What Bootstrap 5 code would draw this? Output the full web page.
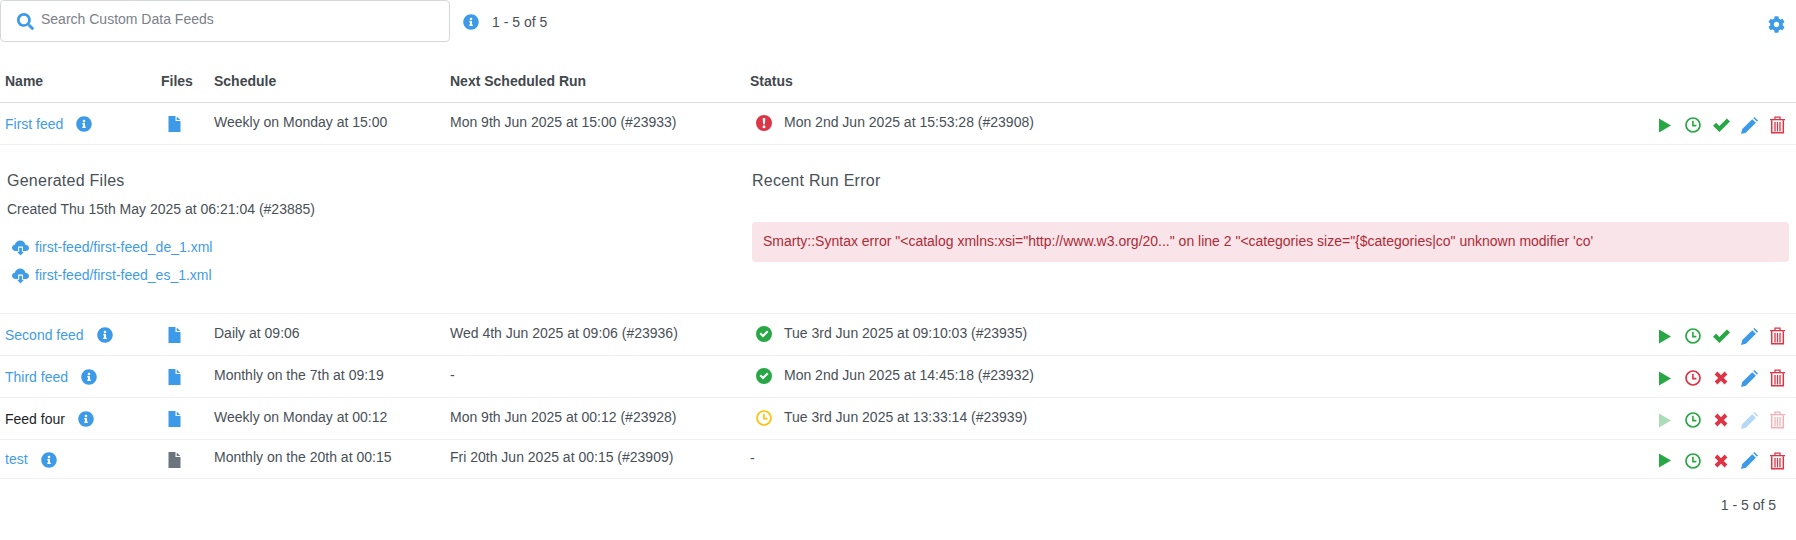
<!DOCTYPE html>
<html lang="en">
<head>
<meta charset="utf-8">
<title>Custom Data Feeds</title>
<link href="https://cdn.jsdelivr.net/npm/bootstrap@5.3.0/dist/css/bootstrap.min.css" rel="stylesheet">
<style>
body{font-family:"Liberation Sans",Arial,sans-serif;font-size:14px;color:#495057;background:#fff;margin:0}
a{color:#3f9ce8;text-decoration:none}
.ic{fill:currentColor;display:block;flex:none}
.c-blue{color:#3c9ae8}.c-green{color:#28a745}.c-red{color:#dc3545}.c-amber{color:#ffc107}.c-grey{color:#6c757d}
.dim{opacity:.38}
.topbar{height:60px}
.searchbox{width:450px;height:42px;border:1px solid #d5d8da;border-radius:4px;padding:0 0 0 16px;gap:7px}
.searchbox input{border:0;outline:0;flex:1;font:14px "Liberation Sans",Arial,sans-serif;color:#495057;padding:0;margin-top:-4px}
.searchbox input::placeholder{color:#7b8187}
.pageinfo{margin-left:13px;gap:13px}
.pageinfo svg{margin-top:6px}
.pageinfo span{margin-top:4px}
.cogwrap{padding:16px 11px 0 0}
.feeds{table-layout:fixed;width:100%;margin:0;border-collapse:collapse}
.feeds th,.feeds td{padding:0 5px;vertical-align:middle;color:#495057;background:transparent;box-shadow:none}
.feeds thead th{height:42px;padding-top:1px;border-bottom:1px solid #dcdcdc;font-weight:700;color:#43484d}
.feeds tbody td{border-bottom:1px solid #eff0f1;height:42px}
.feeds tbody tr.short td{height:39px}
.w-name{width:156px}.w-files{width:53px}.w-sched{width:236px}.w-next{width:300px}.w-status{width:auto}.w-act{width:180px}
.namecell{gap:13px;padding-top:2px}
.plain{color:#212529}
.up{position:relative;top:-1px}
.fileicon{margin:2px 0 0 7px}
.statuscell{gap:12px;padding-left:6px}
.actions{gap:8px;padding-right:4px;padding-top:4px}
.actions>span{width:20px;display:flex;justify-content:center}
.detail{height:168px;padding:0 7px}
.detail .side-l{width:745px}
.detail .side-r{flex:1;padding-right:0}
.dh{font-size:16px;font-weight:400;margin:26px 0 0;line-height:20px;color:#495057;letter-spacing:.25px}
.filelist{margin-top:14px;padding-left:5px}
.filelist a{gap:6px;height:28px}
.errbox{margin:31px 0 0;padding:10px 11px;background:#f9e5e9;color:#b02a37;border:0;border-radius:4px;height:40px;line-height:19px}
.foot{padding:16px 20px 0 0}
</style>
</head>
<body>
<svg width="0" height="0" class="position-absolute">
<symbol id="i-info" viewBox="0 0 512 512"><path d="M256 8C119 8 8 119.1 8 256c0 137 111 248 248 248s248-111 248-248C504 119.1 393 8 256 8zm0 110c23.2 0 42 18.8 42 42s-18.8 42-42 42-42-18.8-42-42 18.8-42 42-42zm56 254c0 6.6-5.4 12-12 12h-88c-6.6 0-12-5.4-12-12v-24c0-6.6 5.4-12 12-12h12v-64h-12c-6.6 0-12-5.4-12-12v-24c0-6.6 5.4-12 12-12h64c6.6 0 12 5.4 12 12v100h12c6.6 0 12 5.4 12 12v24z"/></symbol>
<symbol id="i-search" viewBox="0 0 512 512"><path d="M505 442.7L405.3 343c-4.5-4.5-10.6-7-17-7H372c27.6-35.3 44-79.7 44-128C416 93.1 322.9 0 208 0S0 93.1 0 208s93.1 208 208 208c48.3 0 92.7-16.4 128-44v16.3c0 6.4 2.5 12.5 7 17l99.7 99.7c9.4 9.4 24.6 9.4 33.9 0l28.3-28.3c9.4-9.4 9.4-24.6.1-34zM208 336c-70.7 0-128-57.2-128-128 0-70.7 57.2-128 128-128 70.7 0 128 57.2 128 128 0 70.7-57.2 128-128 128z"/></symbol>
<symbol id="i-cog" viewBox="0 0 512 512"><path d="M487.4 315.7l-42.6-24.6c4.3-23.2 4.3-47 0-70.2l42.6-24.6c4.9-2.8 7.1-8.6 5.5-14-11.1-35.6-30-67.8-54.7-94.6-3.8-4.1-10-5.1-14.8-2.3L380.8 110c-17.9-15.4-38.5-27.3-60.8-35.1V25.8c0-5.6-3.9-10.5-9.4-11.7-36.7-8.2-74.3-7.8-109.2 0-5.5 1.2-9.4 6.1-9.4 11.7V75c-22.2 7.9-42.8 19.8-60.8 35.1L88.7 85.5c-4.9-2.8-11-1.9-14.8 2.3-24.7 26.7-43.6 58.9-54.7 94.6-1.7 5.4.6 11.2 5.5 14L67.3 221c-4.3 23.2-4.3 47 0 70.2l-42.6 24.6c-4.9 2.8-7.1 8.6-5.5 14 11.1 35.6 30 67.8 54.7 94.6 3.8 4.1 10 5.1 14.8 2.3l42.6-24.6c17.9 15.4 38.5 27.3 60.8 35.1v49.2c0 5.6 3.9 10.5 9.4 11.7 36.7 8.2 74.3 7.8 109.2 0 5.5-1.2 9.4-6.1 9.4-11.7v-49.2c22.2-7.9 42.8-19.8 60.8-35.1l42.6 24.6c4.9 2.8 11 1.9 14.8-2.3 24.7-26.7 43.6-58.9 54.7-94.6 1.5-5.5-.7-11.3-5.6-14.1zM256 336c-44.1 0-80-35.9-80-80s35.9-80 80-80 80 35.9 80 80-35.9 80-80 80z"/></symbol>
<symbol id="i-file" viewBox="0 0 12 16"><path d="M0 0h7v5h5v11H0z"/><path d="M8.200 0.400 11.800 3.900H8.200z"/></symbol>
<symbol id="i-play" viewBox="0 0 12 14"><path d="M0 0 12 7 0 14z"/></symbol>
<symbol id="i-clock" viewBox="0 0 16 16"><circle cx="8" cy="8" r="7" fill="none" stroke="currentColor" stroke-width="1.7"/><path d="M7.900 3.800V8.600H11.400" fill="none" stroke="currentColor" stroke-width="1.6"/></symbol>
<symbol id="i-check" viewBox="0 0 16 13"><path d="M0 7.200 2.900 4.300 6 7.400 13.100.3 16 3.200 6 13z"/></symbol>
<symbol id="i-times" viewBox="0 0 14 14"><path d="M0.600 3.400 3.400.6 7 4.200 10.600.6 13.400 3.400 9.800 7 13.400 10.600 10.600 13.400 7 9.800 3.400 13.400.6 10.600 4.200 7z"/></symbol>
<symbol id="i-pencil" viewBox="0 0 16 16"><path d="M0 16 1.200 11.400 10.600 2 14 5.400 4.600 14.800z"/><path d="M11.600 1 12.600 0 16 3.400 15 4.400z"/></symbol>
<symbol id="i-trash" viewBox="0 0 15 17"><path d="M0 2.500h15v1.300H0z"/><path d="M5 2.600V.6h5v2" fill="none" stroke="currentColor" stroke-width="1.300"/><path d="M1.700 3.800V16.300H13.300V3.800" fill="none" stroke="currentColor" stroke-width="1.500"/><path d="M5 5.500V15M7.500 5.500V15M10 5.500V15" fill="none" stroke="currentColor" stroke-width="1.300"/></symbol>
<symbol id="i-cloud" viewBox="0 0 18 16"><path d="M4 11.200C1.800 11.200 0 9.900 0 7.800 0 6 1.300 4.700 3 4.500 3.700 1.900 5.800 0 8.700 0c3 0 5 2 5.500 4.500C16.300 4.500 18 6 18 8c0 1.900-1.500 3.200-3.400 3.200H11.600V6.500H6.500v4.700z"/><path d="M7.600 7.700h2.900v4.200h2.200L9 15.900 5.300 11.900h2.300z"/></symbol>
<symbol id="i-excl" viewBox="0 0 16 16"><path fill-rule="evenodd" d="M8 0a8 8 0 1 0 0 16A8 8 0 0 0 8 0zM6.700 3h2.600l-.4 6.300H7.100zM8 10.200a1.500 1.500 0 1 1 0 3 1.500 1.500 0 0 1 0-3z"/></symbol>
<symbol id="i-okc" viewBox="0 0 16 16"><path fill-rule="evenodd" d="M8 0a8 8 0 1 0 0 16A8 8 0 0 0 8 0zM3.500 8.100 5 6.600 7 8.600 11 4.600 12.500 6.100 7 11.600z"/></symbol>
</svg>

<div class="topbar d-flex">
  <div class="searchbox d-flex align-items-center">
    <svg class="ic c-blue" width="17" height="17"><use href="#i-search"/></svg>
    <input type="text" placeholder="Search Custom Data Feeds" aria-label="Search">
  </div>
  <div class="pageinfo d-flex align-items-start pt-2">
    <svg class="ic c-blue" width="16" height="16"><use href="#i-info"/></svg>
    <span>1 - 5 of 5</span>
  </div>
  <div class="cogwrap ms-auto"><svg class="ic c-blue" width="17" height="17"><use href="#i-cog"/></svg></div>
</div>

<table class="table feeds">
  <thead>
    <tr><th class="w-name">Name</th><th class="w-files">Files</th><th class="w-sched">Schedule</th><th class="w-next">Next Scheduled Run</th><th class="w-status">Status</th><th class="w-act"></th></tr>
  </thead>
  <tbody>
    <tr>
      <td><div class="d-flex align-items-center namecell"><a href="#">First feed</a><svg class="ic c-blue" width="16" height="16"><use href="#i-info"/></svg></div></td>
      <td><svg class="ic c-blue fileicon" width="13" height="16"><use href="#i-file"/></svg></td>
      <td><span class="up">Weekly on Monday at 15:00</span></td>
      <td><span class="up">Mon 9th Jun 2025 at 15:00 (#23933)</span></td>
      <td><div class="d-flex align-items-center statuscell"><svg class="ic c-red" width="16" height="16"><use href="#i-excl"/></svg><span class="up">Mon 2nd Jun 2025 at 15:53:28 (#23908)</span></div></td>
      <td><div class="d-flex justify-content-end align-items-center actions">
        <span><svg class="ic c-green" width="12" height="15"><use href="#i-play"/></svg></span>
        <span><svg class="ic c-green" width="16" height="16"><use href="#i-clock"/></svg></span>
        <span><svg class="ic c-green" width="17" height="14"><use href="#i-check"/></svg></span>
        <span><svg class="ic c-blue" width="17" height="17"><use href="#i-pencil"/></svg></span>
        <span><svg class="ic c-red" width="15" height="18"><use href="#i-trash"/></svg></span>
      </div></td>
    </tr>
    <tr>
      <td colspan="6" class="p-0">
        <div class="detail d-flex">
          <div class="side-l">
            <h5 class="dh">Generated Files</h5>
            <p class="mb-0 mt-2">Created Thu 15th May 2025 at 06:21:04 (#23885)</p>
            <div class="filelist d-flex flex-column">
              <a href="#" class="d-flex align-items-center"><svg class="ic" width="17" height="16"><use href="#i-cloud"/></svg>first-feed/first-feed_de_1.xml</a>
              <a href="#" class="d-flex align-items-center"><svg class="ic" width="17" height="16"><use href="#i-cloud"/></svg>first-feed/first-feed_es_1.xml</a>
            </div>
          </div>
          <div class="side-r">
            <h5 class="dh">Recent Run Error</h5>
            <div class="errbox">Smarty::Syntax error "&lt;catalog xmlns:xsi="http://www.w3.org/20..." on line 2 "&lt;categories size="{$categories|co" unknown modifier 'co'</div>
          </div>
        </div>
      </td>
    </tr>
    <tr>
      <td><div class="d-flex align-items-center namecell"><a href="#">Second feed</a><svg class="ic c-blue" width="16" height="16"><use href="#i-info"/></svg></div></td>
      <td><svg class="ic c-blue fileicon" width="13" height="16"><use href="#i-file"/></svg></td>
      <td><span class="up">Daily at 09:06</span></td>
      <td><span class="up">Wed 4th Jun 2025 at 09:06 (#23936)</span></td>
      <td><div class="d-flex align-items-center statuscell"><svg class="ic c-green" width="16" height="16"><use href="#i-okc"/></svg><span class="up">Tue 3rd Jun 2025 at 09:10:03 (#23935)</span></div></td>
      <td><div class="d-flex justify-content-end align-items-center actions">
        <span><svg class="ic c-green" width="12" height="15"><use href="#i-play"/></svg></span>
        <span><svg class="ic c-green" width="16" height="16"><use href="#i-clock"/></svg></span>
        <span><svg class="ic c-green" width="17" height="14"><use href="#i-check"/></svg></span>
        <span><svg class="ic c-blue" width="17" height="17"><use href="#i-pencil"/></svg></span>
        <span><svg class="ic c-red" width="15" height="18"><use href="#i-trash"/></svg></span>
      </div></td>
    </tr>
    <tr>
      <td><div class="d-flex align-items-center namecell"><a href="#">Third feed</a><svg class="ic c-blue" width="16" height="16"><use href="#i-info"/></svg></div></td>
      <td><svg class="ic c-blue fileicon" width="13" height="16"><use href="#i-file"/></svg></td>
      <td><span class="up">Monthly on the 7th at 09:19</span></td>
      <td><span class="up">-</span></td>
      <td><div class="d-flex align-items-center statuscell"><svg class="ic c-green" width="16" height="16"><use href="#i-okc"/></svg><span class="up">Mon 2nd Jun 2025 at 14:45:18 (#23932)</span></div></td>
      <td><div class="d-flex justify-content-end align-items-center actions">
        <span><svg class="ic c-green" width="12" height="15"><use href="#i-play"/></svg></span>
        <span><svg class="ic c-red" width="16" height="16"><use href="#i-clock"/></svg></span>
        <span><svg class="ic c-red" width="14" height="14"><use href="#i-times"/></svg></span>
        <span><svg class="ic c-blue" width="17" height="17"><use href="#i-pencil"/></svg></span>
        <span><svg class="ic c-red" width="15" height="18"><use href="#i-trash"/></svg></span>
      </div></td>
    </tr>
    <tr>
      <td><div class="d-flex align-items-center namecell"><span class="plain">Feed four</span><svg class="ic c-blue" width="16" height="16"><use href="#i-info"/></svg></div></td>
      <td><svg class="ic c-blue fileicon" width="13" height="16"><use href="#i-file"/></svg></td>
      <td><span class="up">Weekly on Monday at 00:12</span></td>
      <td><span class="up">Mon 9th Jun 2025 at 00:12 (#23928)</span></td>
      <td><div class="d-flex align-items-center statuscell"><svg class="ic c-amber" width="16" height="16"><use href="#i-clock"/></svg><span class="up">Tue 3rd Jun 2025 at 13:33:14 (#23939)</span></div></td>
      <td><div class="d-flex justify-content-end align-items-center actions">
        <span><svg class="ic c-green dim" width="12" height="15"><use href="#i-play"/></svg></span>
        <span><svg class="ic c-green" width="16" height="16"><use href="#i-clock"/></svg></span>
        <span><svg class="ic c-red" width="14" height="14"><use href="#i-times"/></svg></span>
        <span><svg class="ic c-blue dim" width="17" height="17"><use href="#i-pencil"/></svg></span>
        <span><svg class="ic c-red dim" width="15" height="18"><use href="#i-trash"/></svg></span>
      </div></td>
    </tr>
    <tr class="short">
      <td><div class="d-flex align-items-center namecell"><a href="#">test</a><svg class="ic c-blue" width="16" height="16"><use href="#i-info"/></svg></div></td>
      <td><svg class="ic c-grey fileicon" width="13" height="16"><use href="#i-file"/></svg></td>
      <td><span class="up">Monthly on the 20th at 00:15</span></td>
      <td><span class="up">Fri 20th Jun 2025 at 00:15 (#23909)</span></td>
      <td><span>-</span></td>
      <td><div class="d-flex justify-content-end align-items-center actions">
        <span><svg class="ic c-green" width="12" height="15"><use href="#i-play"/></svg></span>
        <span><svg class="ic c-green" width="16" height="16"><use href="#i-clock"/></svg></span>
        <span><svg class="ic c-red" width="14" height="14"><use href="#i-times"/></svg></span>
        <span><svg class="ic c-blue" width="17" height="17"><use href="#i-pencil"/></svg></span>
        <span><svg class="ic c-red" width="15" height="18"><use href="#i-trash"/></svg></span>
      </div></td>
    </tr>
  </tbody>
</table>
<div class="foot text-end">1 - 5 of 5</div>
<script src="https://cdn.jsdelivr.net/npm/bootstrap@5.3.0/dist/js/bootstrap.bundle.min.js"></script>
</body>
</html>
